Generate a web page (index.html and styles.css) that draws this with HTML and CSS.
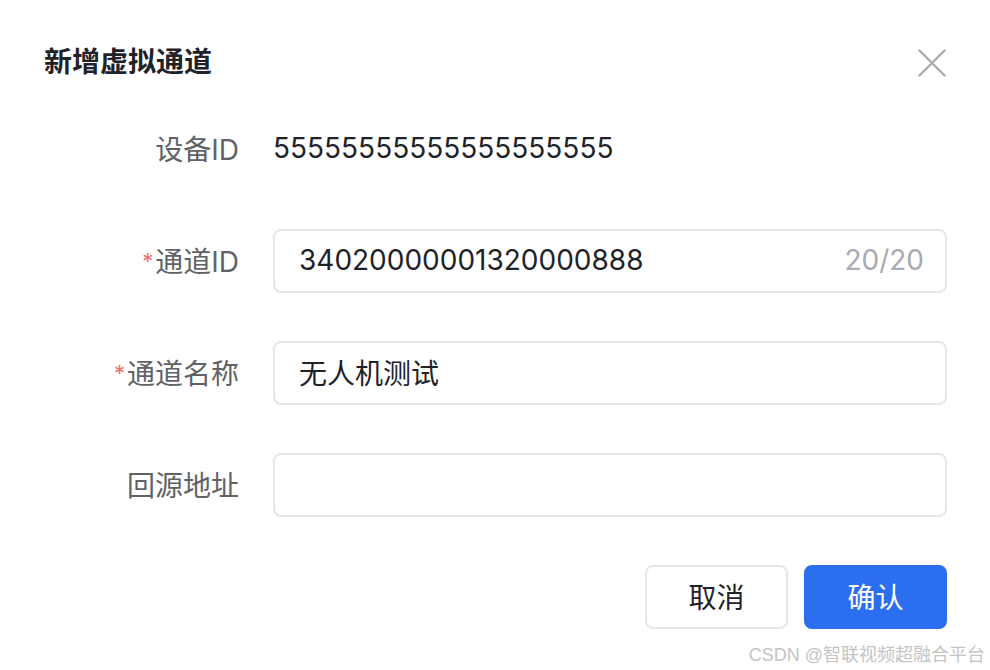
FILE: index.html
```html
<!DOCTYPE html>
<html lang="zh-CN">

<head>
    <meta charset="UTF-8">
    <meta name="viewport" content="width=device-width, initial-scale=1.0">
    <title>新增虚拟通道</title>
    <link rel="stylesheet" href="styles.css">
</head>

<body>
    <div class="dialog">
        <div class="dialog-header">
            <span class="dialog-title">新增虚拟通道</span>
            <button class="close-btn" aria-label="关闭">
                <svg width="28" height="28" viewBox="0 0 28 28">
                    <path d="M1.5 1.5 L26.5 26.5 M26.5 1.5 L1.5 26.5" stroke="#a8abb2" stroke-width="2.4" stroke-linecap="round" fill="none" />
                </svg>
            </button>
        </div>

        <form class="form">
            <div class="form-item">
                <label class="form-label">设备ID</label>
                <div class="form-content">
                    <span class="form-text">55555555555555555555</span>
                </div>
            </div>

            <div class="form-item">
                <label class="form-label is-required">通道ID</label>
                <div class="form-content">
                    <div class="input">
                        <input type="text" value="34020000001320000888" maxlength="20">
                        <span class="input-count">20/20</span>
                    </div>
                </div>
            </div>

            <div class="form-item">
                <label class="form-label is-required">通道名称</label>
                <div class="form-content">
                    <div class="input">
                        <input type="text" value="无人机测试">
                    </div>
                </div>
            </div>

            <div class="form-item">
                <label class="form-label">回源地址</label>
                <div class="form-content">
                    <div class="input">
                        <input type="text" value="">
                    </div>
                </div>
            </div>
        </form>

        <div class="dialog-footer">
            <button class="btn">取消</button>
            <button class="btn btn-primary">确认</button>
        </div>
    </div>

    <div class="watermark">CSDN @智联视频超融合平台</div>
</body>

</html>
```

FILE: styles.css
```css
:root {
    --primary: #2b6ef0;
    --text: #1f2329;
    --label: #606266;
    --muted: #a8abb2;
    --border: #e4e6eb;
    --danger: #f56c6c;
}

body {
    margin: 0;
    padding: 0;
    background-color: white;
    font-family: Inter, "Noto Sans CJK SC", sans-serif;
    color: var(--text);
}

.dialog {
    padding: 43px 43px 0 44px;
}

.dialog-header {
    display: flex;
    justify-content: space-between;
    align-items: center;
    height: 40px;
}

.dialog-title {
    font-size: 28px;
    font-weight: 700;
    line-height: 40px;
    padding-bottom: 2px;
}

.close-btn {
    background: none;
    border: none;
    padding: 0;
    margin-right: 1px;
    width: 28px;
    height: 28px;
    cursor: pointer;
    display: flex;
}

.form {
    margin-top: 34px;
}

.form-item {
    display: flex;
    align-items: center;
    height: 64px;
    margin-bottom: 48px;
}

.form-label {
    width: 229px;
    flex-shrink: 0;
    padding-right: 34px;
    padding-bottom: 3px;
    box-sizing: border-box;
    text-align: right;
    font-size: 28px;
    color: var(--label);
}

.form-label.is-required::before {
    content: "*";
    color: var(--danger);
    font-size: 22px;
    margin-right: 2px;
    vertical-align: 3px;
}

.form-content {
    flex: 1;
}

.form-text {
    display: block;
    padding-bottom: 3px;
    font-size: 28px;
    color: var(--text);
}

.input {
    display: flex;
    align-items: center;
    height: 64px;
    border: 2px solid var(--border);
    border-radius: 8px;
    padding: 0 21px 0 24px;
    box-sizing: border-box;
}

.input input {
    flex: 1;
    border: none;
    outline: none;
    padding: 0 0 3px;
    font-family: inherit;
    font-size: 28px;
    color: var(--text);
    background: transparent;
    min-width: 0;
}

.input-count {
    padding-bottom: 3px;
    font-size: 28px;
    color: var(--muted);
}

.dialog-footer {
    display: flex;
    justify-content: flex-end;
    gap: 16px;
}

.btn {
    width: 143px;
    height: 64px;
    padding-bottom: 3px;
    border: 2px solid var(--border);
    border-radius: 8px;
    background-color: white;
    font-family: inherit;
    font-size: 28px;
    color: var(--text);
    cursor: pointer;
}

.btn-primary {
    background-color: var(--primary);
    border-color: var(--primary);
    color: white;
}

.watermark {
    position: absolute;
    right: 5px;
    top: 640px;
    font-family: "Liberation Sans", "Noto Sans CJK SC", sans-serif;
    font-size: 18px;
    color: #c4c4c4;
    white-space: nowrap;
}
```
